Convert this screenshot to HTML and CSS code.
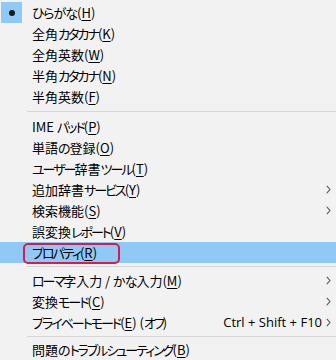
FILE: index.html
```html
<!DOCTYPE html>
<html lang="ja">
<head>
<meta charset="UTF-8">
<title>IME Menu</title>
<link rel="stylesheet" href="styles.css">
</head>
<body>

<div class="menu">
    <div class="item checked">
        <span class="check"><span class="check-box"><span class="dot"></span></span></span>
        <span class="label"><span class="hira">ひらがな</span>(<u>H</u>)</span>
    </div>
    <div class="item"><span class="check"></span><span class="label">全角<span class="kata">カタカナ</span>(<u>K</u>)</span></div>
    <div class="item"><span class="check"></span><span class="label">全角英数(<u>W</u>)</span></div>
    <div class="item"><span class="check"></span><span class="label">半角<span class="kata">カタカナ</span>(<u>N</u>)</span></div>
    <div class="item"><span class="check"></span><span class="label">半角英数(<u>F</u>)</span></div>

    <div class="sep sep-lg"></div>

    <div class="item"><span class="check"></span><span class="label">IME <span class="kata">パッド</span>(<u>P</u>)</span></div>
    <div class="item"><span class="check"></span><span class="label">単語<span class="hira">の</span>登録(<u>O</u>)</span></div>
    <div class="item"><span class="check"></span><span class="label"><span class="kata">ユーザー</span>辞書<span class="kata">ツール</span>(<u>T</u>)</span></div>
    <div class="item">
        <span class="check"></span><span class="label">追加辞書<span class="kata">サービス</span>(<u>Y</u>)</span>
        <span class="arrow"><svg width="5" height="9" viewBox="0 0 5 9"><path d="M0.8 0.8 L4 4.5 L0.8 8.2" fill="none" stroke="#5a5a5a" stroke-width="1.1"/></svg></span>
    </div>
    <div class="item">
        <span class="check"></span><span class="label">検索機能(<u>S</u>)</span>
        <span class="arrow"><svg width="5" height="9" viewBox="0 0 5 9"><path d="M0.8 0.8 L4 4.5 L0.8 8.2" fill="none" stroke="#5a5a5a" stroke-width="1.1"/></svg></span>
    </div>
    <div class="item"><span class="check"></span><span class="label">誤変換<span class="kata">レポート</span>(<u>V</u>)</span></div>
    <div class="item active">
        <span class="check"></span><span class="label"><span class="kata">プロパティ</span>(<u>R</u>)</span>
        <span class="marker"></span>
    </div>

    <div class="sep"></div>

    <div class="item">
        <span class="check"></span><span class="label"><span class="kata">ローマ</span>字入力 / <span class="hira">かな</span>入力(<u>M</u>)</span>
        <span class="arrow"><svg width="5" height="9" viewBox="0 0 5 9"><path d="M0.8 0.8 L4 4.5 L0.8 8.2" fill="none" stroke="#5a5a5a" stroke-width="1.1"/></svg></span>
    </div>
    <div class="item">
        <span class="check"></span><span class="label">変換<span class="kata">モード</span>(<u>C</u>)</span>
        <span class="arrow"><svg width="5" height="9" viewBox="0 0 5 9"><path d="M0.8 0.8 L4 4.5 L0.8 8.2" fill="none" stroke="#5a5a5a" stroke-width="1.1"/></svg></span>
    </div>
    <div class="item">
        <span class="check"></span><span class="label"><span class="kata">プライベートモード</span>(<u>E</u>) (<span class="kata">オフ</span>)</span>
        <span class="shortcut">Ctrl + Shift + F10</span>
        <span class="arrow"><svg width="5" height="9" viewBox="0 0 5 9"><path d="M0.8 0.8 L4 4.5 L0.8 8.2" fill="none" stroke="#5a5a5a" stroke-width="1.1"/></svg></span>
    </div>

    <div class="sep sep-sm"></div>

    <div class="item"><span class="check"></span><span class="label">問題<span class="hira">の</span><span class="kata">トラブルシューティング</span>(<u>B</u>)</span></div>
</div>

</body>
</html>
```

FILE: styles.css
```css
body {
    margin: 0;
    background-color: #f2f2f2;
}
.menu {
    width: 336px;
    padding-top: 2px;
    background-color: #f2f2f2;
    font-family: "Noto Sans CJK JP", sans-serif;
    font-size: 13px;
    font-feature-settings: "palt";
    color: #000;
}
.item {
    position: relative;
    display: flex;
    align-items: center;
    height: 21px;
    line-height: 21px;
}
.item u {
    text-underline-offset: 2px;
}
/* kana is narrower in the original UI font */
.hira {
    letter-spacing: -1px;
}
.kata {
    letter-spacing: -2px;
}
.check {
    flex: none;
    width: 27px;
    height: 21px;
    display: flex;
    align-items: center;
}
.check-box {
    margin-left: 1px;
    width: 21px;
    height: 21px;
    background-color: #90c8f6;
    display: flex;
    align-items: center;
    justify-content: center;
}
.dot {
    width: 6px;
    height: 6px;
    border-radius: 50%;
    background-color: #1a1a1a;
}
.label {
    flex: 1;
    padding-left: 5px;
    white-space: nowrap;
}
.shortcut {
    font-family: "Open Sans", sans-serif;
    font-size: 13px;
    margin-right: 4px;
}
.arrow {
    flex: none;
    width: 10px;
    display: flex;
    align-items: center;
}
.active {
    background-color: #90c8f6;
}
.marker {
    position: absolute;
    left: 23px;
    top: 1px;
    width: 93px;
    height: 17px;
    border: 2px solid #d81b4e;
    border-radius: 5px;
}
.sep {
    height: 7px;
    display: flex;
    align-items: center;
    padding-left: 27px;
}
.sep::after {
    content: "";
    flex: 1;
    border-top: 1px solid #d6d6d6;
}
.sep-lg {
    height: 9px;
}
.sep-sm {
    height: 6px;
}
```
